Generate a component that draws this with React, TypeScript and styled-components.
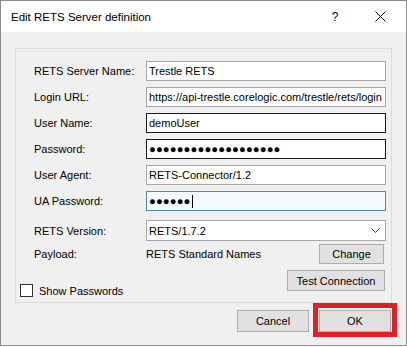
import styled, { createGlobalStyle } from 'styled-components';

const GlobalStyle = createGlobalStyle`
  html, body {
    margin: 0;
    padding: 0;
    background: #ffffff;
  }
  body {
    font-family: 'Liberation Sans', Arial, sans-serif;
    font-size: 11px;
    color: #000;
  }
`;

interface Field {
  label: string;
  value: string;
  tone?: 'normal' | 'dark' | 'focus';
  secret?: boolean;
}

const fields: Field[] = [
  { label: 'RETS Server Name:', value: 'Trestle RETS' },
  { label: 'Login URL:', value: 'https://api-trestle.corelogic.com/trestle/rets/login' },
  { label: 'User Name:', value: 'demoUser', tone: 'dark' },
  { label: 'Password:', value: '●'.repeat(19), tone: 'dark', secret: true },
  { label: 'User Agent:', value: 'RETS-Connector/1.2' },
  { label: 'UA Password:', value: '●'.repeat(6), tone: 'focus', secret: true },
];

function App() {
  return (
    <>
      <GlobalStyle />
      <Window>
        <TitleBar>
          <Title>Edit RETS Server definition</Title>
          <TitleButton>?</TitleButton>
          <TitleButton>
            <svg width="11" height="11" viewBox="0 0 11 11">
              <path d="M0.5 0.5 L10.5 10.5 M10.5 0.5 L0.5 10.5" stroke="#000" strokeWidth="1" />
            </svg>
          </TitleButton>
        </TitleBar>
        <Body>
          <Panel>
            <Form>
              {fields.map((f) => (
                <Row key={f.label}>
                  <Label>{f.label}</Label>
                  <Input $tone={f.tone ?? 'normal'} $secret={f.secret}>
                    {f.value}
                    {f.tone === 'focus' && <Caret />}
                  </Input>
                </Row>
              ))}
              <Row $extra={3}>
                <Label>RETS Version:</Label>
                <Combo>
                  <span>RETS/1.7.2</span>
                  <svg width="9" height="5" viewBox="0 0 9 5">
                    <path d="M0.5 0.5 L4.5 4.5 L8.5 0.5" stroke="#444" strokeWidth="1" fill="none" />
                  </svg>
                </Combo>
              </Row>
              <Row $extra={-3}>
                <Label>Payload:</Label>
                <PayloadLine>
                  <span>RETS Standard Names</span>
                  <Button $w={65} $h={20}>Change</Button>
                </PayloadLine>
              </Row>
            </Form>
            <BottomRow>
              <CheckLabel>
                <CheckBox />
                Show Passwords
              </CheckLabel>
              <Button $w={98} $h={21}>Test Connection</Button>
            </BottomRow>
          </Panel>
          <Footer>
            <Button $w={72} $h={22}>Cancel</Button>
            <Highlighted>
              <Button $w={72} $h={22}>OK</Button>
            </Highlighted>
          </Footer>
        </Body>
      </Window>
    </>
  );
}

export default App;

const Window = styled.div`
  width: 407px;
  height: 346px;
  box-sizing: border-box;
  border: 1px solid #8c8c8c;
  background: #f0f0f0;
  display: flex;
  flex-direction: column;
`;

const TitleBar = styled.div`
  height: 31px;
  background: #ffffff;
  display: flex;
  align-items: center;
  padding-left: 10px;
`;

const Title = styled.div`
  flex: 1;
  font-size: 11.5px;
  padding-top: 1px;
`;

const TitleButton = styled.div`
  width: 46px;
  height: 31px;
  display: flex;
  align-items: center;
  justify-content: center;
  font-size: 12px;

  &:last-child {
    width: 44px;
    margin-right: 4px;
  }
`;

const Body = styled.div`
  flex: 1;
  display: flex;
  flex-direction: column;
  padding: 16px 14px 0 14px;
`;

const Panel = styled.div`
  border: 1px solid #dcdcdc;
  padding: 12px 5px 5px 4px;
  display: flex;
  flex-direction: column;
`;

const Form = styled.div`
  display: flex;
  flex-direction: column;
  gap: 6px;
  padding-left: 14px;
`;

const Row = styled.div<{ $extra?: number }>`
  display: grid;
  grid-template-columns: 112px 1fr;
  align-items: center;
  margin-top: ${({ $extra }) => ($extra ? $extra + 'px' : '0')};
`;

const Label = styled.div`
  white-space: nowrap;
`;

const Input = styled.div<{ $tone: 'normal' | 'dark' | 'focus'; $secret?: boolean }>`
  height: 20px;
  box-sizing: border-box;
  border: 1px solid
    ${({ $tone }) => ($tone === 'dark' ? '#1a1a1a' : $tone === 'focus' ? '#4a88b3' : '#a8a8a8')};
  background: ${({ $tone }) => ($tone === 'focus' ? '#f5fbfe' : '#ffffff')};
  padding: 0 2px;
  display: flex;
  align-items: center;
  white-space: nowrap;
  overflow: hidden;
  font-size: ${({ $secret }) => ($secret ? '11.3px' : '11px')};
  letter-spacing: ${({ $secret }) => ($secret ? '0.1px' : '0')};
`;

const Caret = styled.span`
  display: inline-block;
  width: 1px;
  height: 13px;
  background: #000;
  margin-left: 1px;
`;

const Combo = styled.div`
  height: 21px;
  box-sizing: border-box;
  border: 1px solid #a8a8a8;
  background: #ffffff;
  padding: 0 5px 0 2px;
  display: flex;
  align-items: center;
  justify-content: space-between;
`;

const PayloadLine = styled.div`
  display: flex;
  align-items: center;
  justify-content: space-between;
  padding-right: 2px;
`;

const Button = styled.div<{ $w: number; $h: number }>`
  width: ${({ $w }) => $w}px;
  height: ${({ $h }) => $h}px;
  box-sizing: border-box;
  background: #e1e1e1;
  border: 1px solid #adadad;
  display: flex;
  align-items: center;
  justify-content: center;
  white-space: nowrap;
`;

const BottomRow = styled.div`
  display: flex;
  justify-content: space-between;
  align-items: flex-start;
  margin-top: 6px;
  padding-right: 1px;
`;

const CheckLabel = styled.div`
  display: flex;
  align-items: center;
  gap: 6px;
  margin-top: 14px;
`;

const CheckBox = styled.div`
  width: 13px;
  height: 13px;
  box-sizing: border-box;
  border: 1px solid #333333;
  background: #ffffff;
`;

const Footer = styled.div`
  display: flex;
  justify-content: flex-end;
  gap: 10px;
  margin-top: 7px;
  padding-right: 1px;
`;

const Highlighted = styled.div`
  position: relative;

  &::after {
    content: '';
    position: absolute;
    left: -6px;
    right: -6px;
    top: -7px;
    bottom: -5px;
    border: 5px solid #e31e24;
    pointer-events: none;
  }
`;
